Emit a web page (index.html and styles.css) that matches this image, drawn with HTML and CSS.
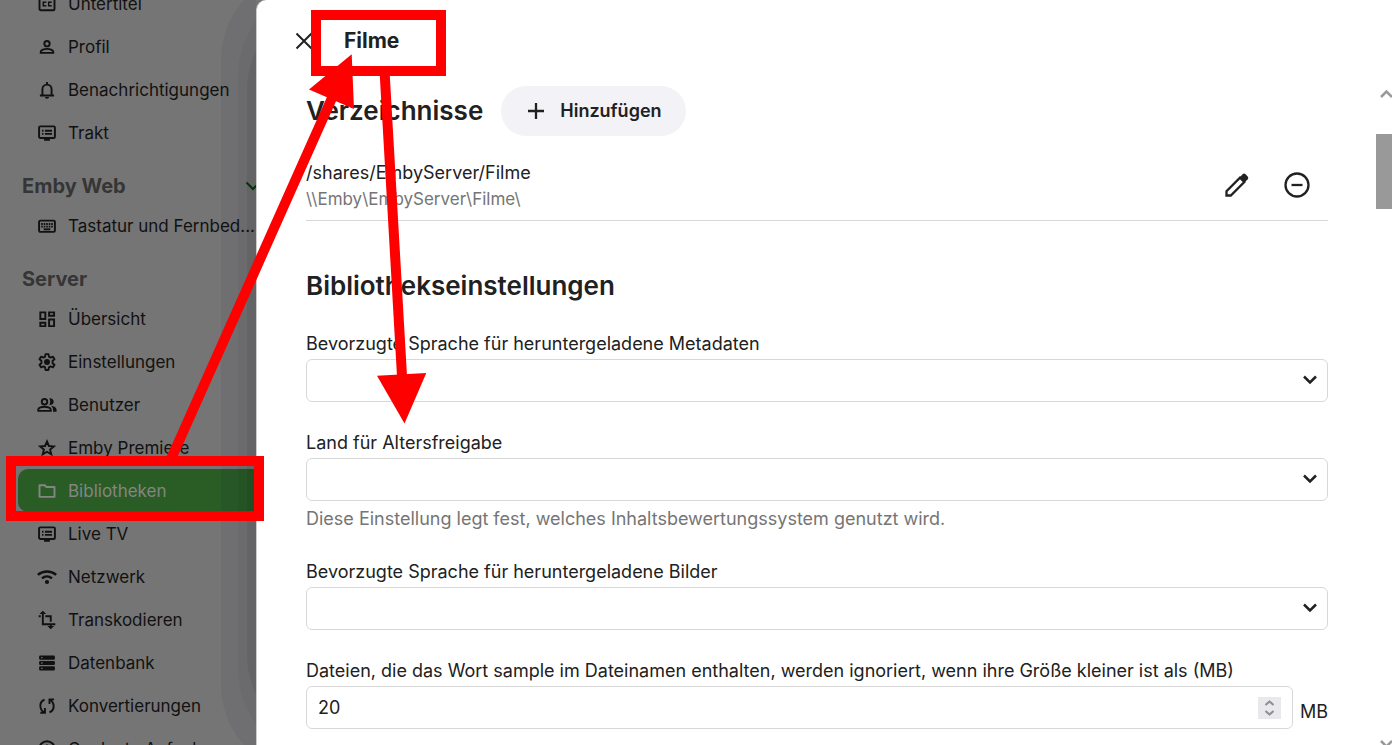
FILE: index.html
```html
<!DOCTYPE html>
<html lang="de">
<head>
<meta charset="utf-8">
<title>Filme</title>
<link rel="stylesheet" href="styles.css">
</head>
<body>
<div class="app">
  <aside class="sidebar">
    <nav class="nav">
      <a class="nav-item" href="#"><svg class="icon" viewBox="0 0 24 24"><rect x="3" y="4.500" width="18" height="15" rx="1.500"/><path d="M10.500 10.500V10h-3v4h3v-.5M17 10.500V10h-3v4h3v-.5" stroke-width="1.700"/></svg>Untertitel</a>
      <a class="nav-item" href="#"><svg class="icon" viewBox="0 0 24 24"><circle cx="12" cy="8" r="3.200"/><path d="M4.500 19v-1.200c0-2.300 4.300-3.600 7.500-3.600s7.500 1.300 7.500 3.600V19z"/></svg>Profil</a>
      <a class="nav-item" href="#"><svg class="icon" viewBox="0 0 24 24"><path d="M3.500 18.500h17M6.500 18v-7a5.500 5.500 0 0 1 11 0v7M12 5V2.500"/><path d="M9.500 20.500h5a2.500 2 0 0 1-5 0z" class="solid"/></svg>Benachrichtigungen</a>
      <a class="nav-item" href="#"><svg class="icon" viewBox="0 0 24 24"><rect x="2.500" y="4" width="19" height="14" rx="1.500"/><path d="M9.500 9.200H18M9.500 13H18M6 9.200h1.800M6 13h1.800M8.500 20h7"/></svg>Trakt</a>
      <h2 class="nav-heading">Emby Web<svg class="nav-toggle" viewBox="0 0 18 18"><path d="m2.500 5.500 6.500 6.500 6.500-6.500"/></svg></h2>
      <a class="nav-item" href="#"><svg class="icon" viewBox="0 0 24 24"><rect x="2.500" y="5.500" width="19" height="13.500" rx="1.500"/><path d="M5 9.500h14M5 12.700h14" stroke-dasharray="2 1"/><path d="M8 16h8"/></svg>Tastatur und Fernbed...</a>
      <h2 class="nav-heading">Server</h2>
      <a class="nav-item" href="#"><svg class="icon" viewBox="0 0 24 24"><path d="M4 4h6v8H4zM14.500 4h6v4h-6zM4 16.500h6v4H4zM14.500 12.500h6v8h-6z"/></svg>Übersicht</a>
      <a class="nav-item" href="#"><svg class="icon" viewBox="0 0 24 24"><path stroke-linejoin="round" d="M9.700 5.500 10.200 2.500h3.600l.5 3 2 1.200 2.900-1.100 1.800 3.100-2.300 1.900v2.800l2.300 1.900-1.800 3.100-2.900-1.100-2 1.200-.5 3h-3.600l-.5-3-2-1.200-2.900 1.100L3 15.300l2.300-1.900v-2.800L3 8.700l1.800-3.100 2.900 1.100z"/><circle class="solid" cx="12" cy="12" r="3.600"/></svg>Einstellungen</a>
      <a class="nav-item" href="#"><svg class="icon" viewBox="0 0 24 24"><circle cx="9" cy="8" r="3.300"/><path d="M1.500 19v-1.500c0-2.200 4.500-3.500 7.500-3.500s7.500 1.300 7.500 3.500V19z"/><path class="solid" d="M14.800 4.200a4 4 0 1 1 0 7.600c1.500-2.300 1.500-5.300 0-7.600zM17 13c3.500.4 6.500 2 6.500 4.700V20h-4.300v-2.500c0-1.700-.8-3-2.200-4.500z"/></svg>Benutzer</a>
      <a class="nav-item" href="#"><svg class="icon" viewBox="0 0 24 24"><path d="m12 4.200 2.300 5.400 5.900.5-4.500 3.800 1.400 5.700-5.100-3.100-5.100 3.100 1.400-5.700-4.500-3.800 5.900-.5z"/></svg>Emby Premiere</a>
      <a class="nav-item nav-item-active" href="#" aria-current="page"><svg class="icon" viewBox="0 0 24 24"><path d="M3 5h6.200l2 2.200H21V19H3z" stroke-linejoin="round"/></svg>Bibliotheken</a>
      <a class="nav-item" href="#"><svg class="icon" viewBox="0 0 24 24"><rect x="2.500" y="4" width="19" height="14" rx="1.500"/><path d="M9.500 9.200H18M9.500 13H18M6 9.200h1.800M6 13h1.800M8.500 20h7"/></svg>Live TV</a>
      <a class="nav-item" href="#"><svg class="icon" viewBox="0 0 24 24"><path d="M1 9.500c6.300-5.500 15.700-5.500 22 0M6 13.700c3.500-3 8.500-3 12 0" stroke-width="2.900"/><circle class="solid" cx="12" cy="18" r="2.500"/></svg>Netzwerk</a>
      <a class="nav-item" href="#"><svg class="icon" viewBox="0 0 24 24"><path d="M7 4v13h15M2 7.500h2.500M10 7.500h6.500V14M16.500 17v3"/><path class="solid" d="m7 .8 4 4H3zM16.500 23.200l4-4h-8z"/></svg>Transkodieren</a>
      <a class="nav-item" href="#"><svg class="icon" viewBox="0 0 24 24"><path class="solid" fill-rule="evenodd" d="M4 3h16a1.500 1.500 0 0 1 1.500 1.500v2A1.500 1.500 0 0 1 20 8H4a1.500 1.500 0 0 1-1.500-1.500v-2A1.500 1.500 0 0 1 4 3zm1 1.700v1.600h1.600V4.700zM4 9.500h16a1.500 1.500 0 0 1 1.500 1.500v2a1.500 1.500 0 0 1-1.500 1.500H4A1.500 1.500 0 0 1 2.500 13v-2A1.500 1.500 0 0 1 4 9.500zm1 1.700v1.600h1.600v-1.600zM4 16h16a1.500 1.500 0 0 1 1.500 1.500v2A1.500 1.500 0 0 1 20 21H4a1.500 1.500 0 0 1-1.500-1.500v-2A1.500 1.500 0 0 1 4 16zm1 1.700v1.600h1.600v-1.600z"/></svg>Datenbank</a>
      <a class="nav-item" href="#"><svg class="icon" viewBox="0 0 24 24"><path d="M9 4.500C2.500 7 2.500 15 8 19.500M4 20h5.500v-5.500M15 19.500c6.500-2.500 6.500-10.500 1-15M20.500 4H15v5.500"/></svg>Konvertierungen</a>
      <a class="nav-item" href="#"><svg class="icon" viewBox="0 0 24 24"><circle cx="12" cy="12" r="9.300"/><path d="M12 6.500V12l4 2.500"/></svg>Geplante Aufgaben</a>
    </nav>
    <div class="shade shade-outer"></div>
    <div class="shade shade-middle"></div>
    <div class="shade shade-inner"></div>
  </aside>

  <main class="dialog">
    <header class="dialog-header">
      <button class="icon-button close" type="button" aria-label="Schließen"><svg viewBox="0 0 18 18"><path d="m1.500 1.500 15 15M16.500 1.500l-15 15"/></svg></button>
      <h1 class="dialog-title">Filme</h1>
    </header>
    <div class="dialog-body">
      <form class="content">
        <section class="folders">
          <div class="section-head">
            <h2 class="section-title">Verzeichnisse</h2>
            <button class="add-button" type="button"><svg viewBox="0 0 18 18"><path d="M9 1v16M1 9h16"/></svg>Hinzufügen</button>
          </div>
          <div class="folder">
            <div class="folder-text">
              <div class="folder-path">/shares/EmbyServer/Filme</div>
              <div class="folder-network">\\Emby\EmbyServer\Filme\</div>
            </div>
            <button class="icon-button" type="button" aria-label="Bearbeiten"><svg viewBox="0 0 28 28"><path d="M3.500 24.500v-4.300L17 6.700l4.300 4.300L7.800 24.500z"/><path class="solid" d="m16.500 6.500 3.200-3.200a2 2 0 0 1 2.800 0l2.200 2.200a2 2 0 0 1 0 2.800l-3.200 3.200z"/></svg></button>
            <button class="icon-button" type="button" aria-label="Entfernen"><svg viewBox="0 0 28 28"><circle cx="14" cy="14" r="11.500"/><path d="M8.500 14h11"/></svg></button>
          </div>
        </section>

        <h2 class="section-title settings-title">Bibliothekseinstellungen</h2>

        <div class="field">
          <label for="meta-lang">Bevorzugte Sprache für heruntergeladene Metadaten</label>
          <div class="select-wrap"><select class="control" id="meta-lang"><option></option></select><svg class="chevron" viewBox="0 0 16 16"><path d="m2 4.500 6 6 6-6"/></svg></div>
        </div>
        <div class="field">
          <label for="country">Land für Altersfreigabe</label>
          <div class="select-wrap"><select class="control" id="country"><option></option></select><svg class="chevron" viewBox="0 0 16 16"><path d="m2 4.500 6 6 6-6"/></svg></div>
          <p class="help">Diese Einstellung legt fest, welches Inhaltsbewertungssystem genutzt wird.</p>
        </div>
        <div class="field">
          <label for="image-lang">Bevorzugte Sprache für heruntergeladene Bilder</label>
          <div class="select-wrap"><select class="control" id="image-lang"><option></option></select><svg class="chevron" viewBox="0 0 16 16"><path d="m2 4.500 6 6 6-6"/></svg></div>
        </div>
        <div class="field">
          <label for="sample-size">Dateien, die das Wort sample im Dateinamen enthalten, werden ignoriert, wenn ihre Größe kleiner ist als (MB)</label>
          <div class="number-row">
            <div class="number-wrap"><input class="control" id="sample-size" type="number" value="20"><svg class="spinner" viewBox="0 0 23 22"><path d="m7.500 8 4-3.500 4 3.500M7.500 14l4 3.500 4-3.500"/></svg></div>
            <span class="unit">MB</span>
          </div>
        </div>
      </form>
      <div class="scrollbar" aria-hidden="true">
        <svg class="scroll-arrow" viewBox="0 0 16 16"><path d="m5 11 5.500-5.500L16 11"/></svg>
        <div class="scroll-track"><div class="scroll-thumb"></div></div>
        <svg class="scroll-arrow" viewBox="0 0 16 16"><path d="m5 12 5.500 5.500L16 12"/></svg>
      </div>
    </div>
  </main>
</div>

<svg class="annotations" aria-hidden="true">
  <rect x="316" y="15" width="125" height="56"/>
  <rect x="11" y="461" width="248" height="55"/>
  <path d="M171 459 332 98M384.700 74 402 376"/>
  <path class="head" d="m351.700 54.300-42.700 35.200 45 19.500zM404.500 423.500 377 375.700l49.300-2.700z"/>
</svg>
</body>
</html>
```
FILE: styles.css
```css
* { box-sizing: border-box; }

body {
  margin: 0;
  font: 18px/24px Inter, sans-serif;
  color: #212121;
  background: #757575;
  overflow: hidden;
}

h1, h2, p { margin: 0; }
button, input, select { font: inherit; color: inherit; }

svg { fill: none; stroke: currentColor; stroke-width: 2; }
.solid { fill: currentColor; stroke: none; }

.app {
  display: grid;
  grid-template-columns: 256px minmax(0, 1fr);
  height: 100vh;
}

/* Sidebar */
.sidebar {
  position: relative;
  overflow: hidden;
  background: #757575;
  color: #111;
}

.nav {
  width: 280px;
  margin-top: -18px;
}

.nav-item {
  display: flex;
  align-items: center;
  gap: 11px;
  height: 43px;
  margin-left: 18px;
  padding-left: 19px;
  font-size: 17px;
  color: inherit;
  text-decoration: none;
  white-space: nowrap;
}

.nav-item-active {
  border-radius: 10px;
  background: #2a5c26;
  color: #858585;
}

.icon { width: 20px; height: 20px; flex: none; stroke-width: 2.300; }

.nav-heading {
  display: flex;
  justify-content: space-between;
  align-items: center;
  padding: 20px 18px 6px 22px;
  font-size: 20px;
  line-height: 24px;
  font-weight: 700;
  color: #353535;
}

.nav-toggle { width: 18px; height: 18px; color: #063d06; }

.shade {
  position: absolute;
  right: -200px;
  border-radius: 90px;
}
.shade-outer { left: 221px; top: -30px; bottom: -30px; background: #0000200d; }
.shade-middle { left: 238px; top: -15px; bottom: -15px; background: #00000008; }
.shade-inner { left: 247px; top: 0; bottom: 0; background: #00000010; }

/* Dialog */
.dialog {
  position: relative;
  display: flex;
  flex-direction: column;
  min-height: 0;
  overflow: hidden;
  border-left: 1px solid #ccc;
  border-radius: 10px 0 0 0;
  background: #fff;
}

.dialog-header {
  display: flex;
  align-items: center;
  gap: 31px;
  padding: 26px 38px 22px;
}

.dialog-title { font-size: 21px; line-height: 30px; font-weight: 700; }

.icon-button {
  flex: none;
  padding: 0;
  border: 0;
  background: none;
}
.icon-button svg { display: block; width: 28px; height: 28px; stroke-width: 2.300; }
.close svg { width: 18px; height: 18px; stroke-width: 2; }

.dialog-body { display: flex; flex: 1; min-height: 0; }

.content {
  flex: 1;
  min-width: 0;
  padding: 8px 48px 0 49px;
}

.section-head { display: flex; align-items: center; gap: 18px; }
.section-title { font-size: 26px; line-height: 36px; font-weight: 600; }

.add-button {
  display: flex;
  align-items: center;
  gap: 15px;
  height: 50px;
  padding: 0 24px 0 26px;
  border: 0;
  border-radius: 25px;
  background: #f2f2f7;
  font-weight: 600;
}
.add-button svg { width: 18px; height: 18px; stroke-width: 2.300; }

.folder {
  display: flex;
  align-items: center;
  gap: 32px;
  margin-top: 14px;
  padding: 10px 17px 8px 0;
  border-bottom: 1px solid #d8d8d8;
}
.folder .icon-button { padding-bottom: 2px; }
.folder-text { flex: 1; line-height: 26px; }
.folder-network { font-size: 17px; color: #757575; }

.settings-title { margin: 47px 0 28px; }

.field { margin-bottom: 29px; }
.field label { display: block; margin-bottom: 3px; }

.select-wrap, .number-wrap { position: relative; flex: 1; }

.control {
  display: block;
  width: 100%;
  height: 43px;
  padding: 0 11px;
  border: 1px solid #d8d8d8;
  border-radius: 6px;
  background: #fff;
  appearance: none;
}
.control[type="number"] { appearance: textfield; }
.control::-webkit-inner-spin-button { appearance: none; }

.chevron {
  position: absolute;
  right: 10px;
  top: 13px;
  width: 16px;
  height: 16px;
  stroke-width: 2.500;
  pointer-events: none;
}

.help { margin-top: 6px; color: #757575; }

.number-row { display: flex; align-items: center; gap: 7px; }
.spinner {
  position: absolute;
  right: 12px;
  top: 11px;
  width: 23px;
  height: 22px;
  background: #e9e9ec;
  color: #8c8c96;
  pointer-events: none;
}
.unit { padding-top: 8px; }

.scrollbar {
  display: flex;
  flex-direction: column;
  flex: none;
  width: 16px;
  padding-top: 8px;
  color: #999;
}
.scroll-arrow { flex: none; width: 16px; height: 16px; stroke-width: 2.500; }
.scroll-track { flex: 1; padding-top: 32px; }
.scroll-thumb { height: 75px; background: #999; }

/* Red markers drawn over the page */
.annotations {
  position: absolute;
  inset: 0;
  width: 100%;
  height: 100%;
  stroke: #f00;
  stroke-width: 10;
  pointer-events: none;
}
.head { fill: #f00; stroke: none; }
```
